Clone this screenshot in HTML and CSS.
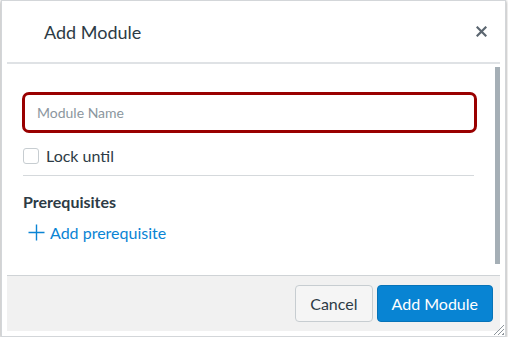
FILE: index.html
```html
<!DOCTYPE html>
<html lang="en">
<head>
    <meta charset="UTF-8">
    <meta name="viewport" content="width=device-width, initial-scale=1.0">
    <title>Add Module</title>
    <link rel="stylesheet" href="styles.css">
</head>
<body>
    <div class="dialog">
        <!-- Header -->
        <div class="dialog-header">
            <h1 class="dialog-title">Add Module</h1>
            <button class="close-btn" aria-label="Close">
                <svg width="11" height="11" viewBox="0 0 11 11">
                    <path d="M1.5 1.5 L9.5 9.5 M9.5 1.5 L1.5 9.5" stroke="#5b6670" stroke-width="2.2" stroke-linecap="square"/>
                </svg>
            </button>
        </div>

        <!-- Body -->
        <div class="dialog-body">
            <div class="dialog-content">
                <input type="text" class="module-name" placeholder="Module Name">

                <label class="lock-row">
                    <span class="checkbox"></span>
                    <span>Lock until</span>
                </label>

                <h2 class="section-title">Prerequisites</h2>
                <a href="#" class="add-link">
                    <svg width="17" height="17" viewBox="0 0 17 17">
                        <path d="M8.5 0.5 V16.5 M0.5 8.5 H16.5" stroke="#0a84d4" stroke-width="1.4"/>
                    </svg>
                    <span>Add prerequisite</span>
                </a>
            </div>
            <div class="scrollbar"></div>
        </div>

        <!-- Footer -->
        <div class="dialog-footer">
            <button class="btn btn-default">Cancel</button>
            <button class="btn btn-primary">Add Module</button>
        </div>

        <div class="resize-grip"></div>
    </div>
</body>
</html>
```

FILE: styles.css
```css
body {
    margin: 0;
    background-color: #fff;
    font-family: Lato, "Open Sans", sans-serif;
    color: #2d3b45;
}

.dialog {
    position: relative;
    width: 493px;
    height: 330px;
    margin: 0 0 0 1px;
    padding: 0 5px 5px 5px;
    border: 1px solid #d3d6d9;
    background-color: #fff;
    box-shadow: 0 1px 3px rgba(0, 0, 0, 0.45);
}

.dialog-header {
    display: flex;
    align-items: center;
    justify-content: space-between;
    height: 61px;
    padding: 0 13px 0 37px;
    border-bottom: 2px solid #dfe2e5;
}

.dialog-title {
    margin: 0;
    font-size: 18px;
    font-weight: normal;
    color: #2d3b45;
}

.close-btn {
    display: flex;
    padding: 0;
    border: none;
    background: none;
    cursor: pointer;
}

.dialog-body {
    display: flex;
    height: 211px;
}

.dialog-content {
    flex: 1;
    padding: 28px 18px 0 15px;
}

.scrollbar {
    width: 5px;
    margin: 3px 0 11px 0;
    background-color: #a5afb6;
}

.module-name {
    display: block;
    box-sizing: border-box;
    width: 100%;
    height: 41px;
    padding: 0 12px;
    border: 3px solid #990000;
    border-radius: 7px;
    font-family: Lato, sans-serif;
    font-size: 14px;
    color: #2d3b45;
    outline: none;
}

.module-name::placeholder {
    color: #8b969e;
}

.lock-row {
    display: flex;
    align-items: center;
    gap: 7px;
    height: 27px;
    margin: 9px 3px 0 1px;
    padding-bottom: 6px;
    border-bottom: 1px solid #d5d9dc;
    font-size: 16px;
}

.checkbox {
    box-sizing: border-box;
    width: 16px;
    height: 16px;
    border: 1px solid #c7cdd1;
    border-radius: 3px;
}

.section-title {
    margin: 16px 0 0 1px;
    font-size: 16px;
    font-weight: bold;
    color: #2d3b45;
}

.add-link {
    display: inline-flex;
    align-items: center;
    gap: 5px;
    margin: 12px 0 0 6px;
    font-size: 16px;
    color: #0a84d4;
    text-decoration: none;
}

.dialog-footer {
    display: flex;
    justify-content: flex-end;
    align-items: center;
    gap: 4px;
    height: 55px;
    padding-right: 7px;
    border-top: 1px solid #cfd3d6;
    background-color: #f1f1f1;
}

.btn {
    height: 37px;
    padding: 0 14px;
    border-radius: 4px;
    font-family: Lato, sans-serif;
    font-size: 16px;
    cursor: pointer;
}

.btn-default {
    background-color: #f5f5f5;
    border: 1px solid #c7cdd1;
    color: #2d3b45;
}

.btn-primary {
    background-color: #0884d3;
    border: 1px solid #0673b8;
    color: #fff;
}

/* resize handle in the corner */
.resize-grip {
    position: absolute;
    right: 1px;
    bottom: 1px;
    width: 11px;
    height: 11px;
    background: repeating-linear-gradient(135deg, transparent 0, transparent 2px, #8d959b 2px, #8d959b 3px);
    clip-path: polygon(100% 0, 100% 100%, 0 100%);
}
```
